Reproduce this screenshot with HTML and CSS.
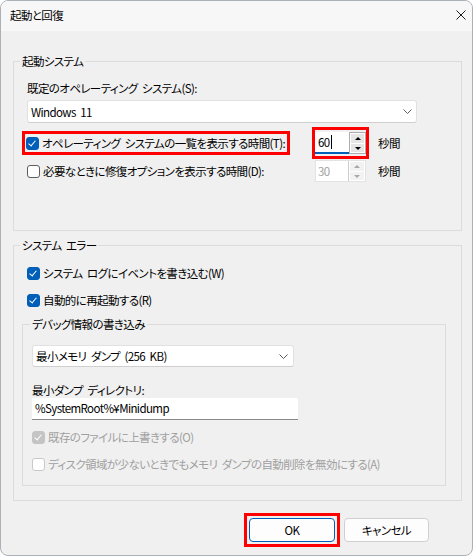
FILE: index.html
```html
<!DOCTYPE html>
<html lang="ja">
<head>
  <meta charset="UTF-8">
  <title>起動と回復</title>
  <link rel="stylesheet" href="styles.css">
</head>
<body>
<div class="window">
  <div class="titlebar">
    <span class="title">起動と回復</span>
    <svg class="close" width="10" height="10" viewBox="0 0 10 10">
      <path d="M0.5 0.5 L9.5 9.5 M9.5 0.5 L0.5 9.5" stroke="#1b1b1b" stroke-width="1" fill="none"/>
    </svg>
  </div>

  <div class="content">
    <fieldset class="group startup">
      <legend>起動システム</legend>
      <div class="field-label">既定のオペレーティング システム(S):</div>
      <div class="select os-select">
        <span>Windows 11</span>
        <svg class="chevron" width="9" height="5" viewBox="0 0 9 5"><path d="M0.5 0.5 L4.5 4.5 L8.5 0.5" stroke="#5c5c5c" fill="none"/></svg>
      </div>

      <div class="timeouts">
        <label class="check highlight"><span class="box checked"></span>オペレーティング システムの一覧を表示する時間(T):</label>
        <div class="spin-highlight">
          <div class="spin focused">
            <span class="spin-value">60<i class="caret"></i></span>
            <div class="spin-arrows">
              <span class="arrow up"></span>
              <span class="arrow down"></span>
            </div>
          </div>
        </div>
        <span class="unit">秒間</span>

        <label class="check"><span class="box"></span>必要なときに修復オプションを表示する時間(D):</label>
        <div class="spin disabled">
          <span class="spin-value">30</span>
          <div class="spin-arrows">
            <span class="arrow up"></span>
            <span class="arrow down"></span>
          </div>
        </div>
        <span class="unit">秒間</span>
      </div>
    </fieldset>

    <fieldset class="group errors">
      <legend>システム エラー</legend>
      <label class="check row"><span class="box checked"></span>システム ログにイベントを書き込む(W)</label>
      <label class="check row"><span class="box checked"></span>自動的に再起動する(R)</label>

      <fieldset class="group debug">
        <legend>デバッグ情報の書き込み</legend>
        <div class="select dump-select">
          <span>最小メモリ ダンプ (256 KB)</span>
          <svg class="chevron" width="9" height="5" viewBox="0 0 9 5"><path d="M0.5 0.5 L4.5 4.5 L8.5 0.5" stroke="#5c5c5c" fill="none"/></svg>
        </div>
        <div class="field-label dir-label">最小ダンプ ディレクトリ:</div>
        <div class="textbox">%SystemRoot%¥Minidump</div>
        <label class="check row disabled first"><span class="box checked"></span>既存のファイルに上書きする(O)</label>
        <label class="check row disabled"><span class="box"></span>ディスク領域が少ないときでもメモリ ダンプの自動削除を無効にする(A)</label>
      </fieldset>
    </fieldset>

    <div class="buttons">
      <div class="btn-highlight"><button class="btn default">OK</button></div>
      <button class="btn">キャンセル</button>
    </div>
  </div>
</div>
</body>
</html>
```

FILE: styles.css
```css
body {
  margin: 0;
  background: #ffffff;
  font-family: "Noto Sans CJK JP", sans-serif;
  font-size: 11.5px;
  letter-spacing: -0.6px;
  word-spacing: 2.5px;
  font-feature-settings: "palt";
  color: #000000;
}

.window {
  box-sizing: border-box;
  width: 473px;
  height: 556px;
  border: 1px solid #aab1b9;
  border-radius: 8px;
  background: #f0f0f0;
  overflow: hidden;
}

.titlebar {
  height: 30px;
  background: #f7f7f7;
  display: flex;
  align-items: center;
  justify-content: space-between;
  padding: 0 6px 0 9px;
}

.title {
  line-height: 16px;
  margin-top: -2px;
}

.close {
  margin-top: -2px;
}

.content {
  padding: 22px 10px 0 12px;
}

/* group boxes */
.group {
  margin: 0;
  border: 1px solid #dcdcdc;
  min-width: 0;
}

.group legend {
  line-height: 16px;
  padding: 0 2px;
}

.startup {
  padding: 11px 15px 0 13px;
  height: 178px;
  box-sizing: border-box;
  margin-bottom: 6px;
}

.startup legend {
  margin-left: -7px;
}

.errors {
  padding: 12px 15px 14px 13px;
}

.errors legend {
  margin-left: -7px;
}

.debug {
  margin: 8px 0 0 -5px;
  padding: 13px 10px 13px 9px;
}

.debug legend {
  margin-left: -2px;
}

.field-label {
  line-height: 16px;
}

/* drop downs and text boxes */
.select {
  box-sizing: border-box;
  height: 23px;
  background: #ffffff;
  border: 1px solid #e1e1e1;
  border-bottom-color: #cfcfcf;
  border-radius: 3px;
  display: flex;
  align-items: center;
  justify-content: space-between;
  padding: 0 4px 0 3px;
  line-height: 16px;
}

.os-select {
  width: 390px;
  margin-top: 4px;
}

.dump-select {
  width: 262px;
  height: 22px;
  padding-right: 5px;
}

.dir-label {
  margin-top: 15px;
}

.textbox {
  box-sizing: border-box;
  width: 266px;
  height: 22px;
  background: #ffffff;
  border-bottom: 1px solid #8a8a8a;
  border-radius: 2px 2px 0 0;
  padding: 0 3px;
  line-height: 21px;
}

/* check boxes */
.check {
  display: flex;
  align-items: center;
  line-height: 16px;
  white-space: nowrap;
}

.box {
  box-sizing: border-box;
  width: 13px;
  height: 13px;
  border: 1px solid #5f5f5f;
  border-radius: 3px;
  background: #ffffff;
  margin-right: 3px;
  flex: none;
  position: relative;
}

.box.checked {
  background: #005fb8;
  border-color: #005fb8;
}

.box.checked::after {
  content: "";
  position: absolute;
  left: 3px;
  top: 1px;
  width: 3px;
  height: 6px;
  border: solid #ffffff;
  border-width: 0 1px 1px 0;
  transform: rotate(40deg);
}

.check.disabled {
  color: #a0a0a0;
}

.check.disabled .box {
  border-color: #c8c8c8;
}

.check.disabled .box.checked {
  background: #c4c4c4;
  border-color: #c4c4c4;
}

.errors > .row + .row {
  margin-top: 11px;
}

.debug .row.first {
  margin-top: 9px;
}

.debug .row + .row {
  margin-top: 11px;
}

/* timeout rows */
.timeouts {
  display: grid;
  grid-template-columns: 276px 51px auto;
  grid-template-rows: 32px 22px;
  column-gap: 12px;
  row-gap: 1px;
  align-items: center;
  margin-top: 4px;
}

.highlight {
  justify-self: start;
  border: 3px solid #ff0000;
  padding: 1px 2px 1px 1px;
  margin-left: -5px;
}

.spin-highlight {
  border: 3px solid #ff0000;
  padding: 2px 0;
  margin: 0 -3px;
}

.spin {
  box-sizing: border-box;
  width: 51px;
  height: 22px;
  background: #ffffff;
  display: flex;
  align-items: stretch;
}

.spin-value {
  flex: 1;
  padding-left: 3px;
  line-height: 21px;
  display: flex;
  align-items: center;
}

.spin.focused .spin-value {
  border-bottom: 2px solid #005fb8;
}

.caret {
  display: inline-block;
  width: 1px;
  height: 14px;
  background: #000000;
  margin-left: 1px;
}

.spin-arrows {
  width: 17px;
  display: flex;
  flex-direction: column;
  border: 1px solid #adadad;
  box-sizing: border-box;
  background: #ffffff;
  padding: 1px;
  gap: 1px;
}

.arrow {
  flex: 1;
  background: #e6e6e6;
  position: relative;
}

.arrow::after {
  content: "";
  position: absolute;
  left: 4px;
  width: 0;
  height: 0;
  border-left: 3px solid transparent;
  border-right: 3px solid transparent;
}

.arrow.up::after {
  top: 3px;
  border-bottom: 3px solid #000000;
}

.arrow.down::after {
  top: 3px;
  border-top: 3px solid #000000;
}

.spin.disabled {
  border: 1px solid #e3e3e3;
  color: #a0a0a0;
}

.spin.disabled .spin-value {
  padding-left: 2px;
}

.spin.disabled .spin-arrows {
  border-color: #cccccc;
  border-top: none;
  border-bottom: none;
  border-right: none;
}

.spin.disabled .arrow {
  background: #f2f2f2;
}

.spin.disabled .arrow.up::after {
  border-bottom-color: #a8a8a8;
}

.spin.disabled .arrow.down::after {
  border-top-color: #a8a8a8;
}

.unit {
  line-height: 16px;
}

/* buttons */
.buttons {
  display: flex;
  justify-content: flex-end;
  align-items: center;
  gap: 4px;
  margin-top: 12px;
  padding-right: 33px;
}

.btn-highlight {
  border: 3px solid #ff0000;
  padding: 2px;
}

.btn {
  box-sizing: border-box;
  width: 85px;
  height: 24px;
  background: #fdfdfd;
  border: 1px solid #d0d0d0;
  border-radius: 4px;
  font-family: "Noto Sans CJK JP", sans-serif;
  font-size: 11.5px;
  letter-spacing: -0.6px;
  font-feature-settings: "palt";
  color: #000000;
  padding: 0;
  display: block;
}

.btn.default {
  width: 86px;
  border-color: #005fb8;
}
```
